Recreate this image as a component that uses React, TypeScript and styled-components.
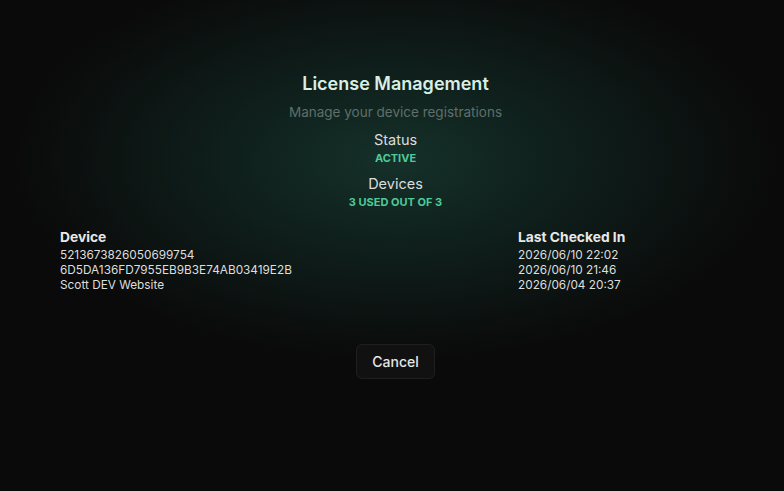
import { Fragment } from "react";
import styled, { createGlobalStyle } from "styled-components";

const GlobalStyle = createGlobalStyle`
    html, body {
        margin: 0;
        height: 100%;
        background: #0a0a0a;
    }
    #root {
        height: 100%;
    }
`;

const Page = styled.div`
    height: 491px;
    box-sizing: border-box;
    padding: 72px 0 0 7px;
    background: radial-gradient(
        ellipse 380px 200px at 395px 160px,
        #15302a 0%,
        #0f1f1b 45%,
        #0a0a0a 100%
    );
    font-family: Inter, "Liberation Sans", sans-serif;
    display: flex;
    flex-direction: column;
    align-items: center;
`;

const Title = styled.h1`
    margin: 0;
    font-size: 18px;
    font-weight: 600;
    line-height: 24px;
    color: #d9efe4;
`;

const Subtitle = styled.p`
    margin: 6px 0 0;
    font-size: 13.5px;
    line-height: 20px;
    color: #5f6f69;
`;

const StatBlock = styled.div<{ $gap: number }>`
    margin-top: ${(p) => p.$gap}px;
    display: flex;
    flex-direction: column;
    align-items: center;
`;

const StatLabel = styled.div`
    font-size: 14.5px;
    line-height: 20px;
    color: #dcdcdc;
`;

const StatValue = styled.div`
    font-size: 11px;
    font-weight: 700;
    line-height: 16px;
    text-transform: uppercase;
    color: #4ecb97;
`;

const Table = styled.div`
    align-self: stretch;
    margin: 17px 60px 0 53px;
    display: grid;
    grid-template-columns: 458px 1fr;
`;

const HeadCell = styled.div`
    font-size: 13.8px;
    font-weight: 700;
    line-height: 21px;
    color: #e8e8e8;
`;

const Cell = styled.div`
    font-size: 11.8px;
    line-height: 15px;
    color: #dedede;
`;

const Footer = styled.div`
    margin-top: 51px;
    display: flex;
    justify-content: center;
`;

const Button = styled.button`
    height: 35px;
    width: 79px;
    padding: 0;
    border-radius: 6px;
    border: 1px solid #1f1f1f;
    background: #111111;
    color: #e6e6e6;
    font-family: inherit;
    font-size: 14px;
    font-weight: 500;
    cursor: pointer;
`;

const devices = [
    { name: "5213673826050699754", checked: "2026/06/10 22:02" },
    { name: "6D5DA136FD7955EB9B3E74AB03419E2B", checked: "2026/06/10 21:46" },
    { name: "Scott DEV Website", checked: "2026/06/04 20:37" }
];

const App = () => {
    return (
        <>
            <GlobalStyle />
            <Page>
                <Title>License Management</Title>
                <Subtitle>Manage your device registrations</Subtitle>
                <StatBlock $gap={8}>
                    <StatLabel>Status</StatLabel>
                    <StatValue>Active</StatValue>
                </StatBlock>
                <StatBlock $gap={8}>
                    <StatLabel>Devices</StatLabel>
                    <StatValue>3 used out of 3</StatValue>
                </StatBlock>
                <Table>
                    <HeadCell>Device</HeadCell>
                    <HeadCell>Last Checked In</HeadCell>
                    {devices.map((d) => (
                        <Fragment key={d.name}>
                            <Cell>{d.name}</Cell>
                            <Cell>{d.checked}</Cell>
                        </Fragment>
                    ))}
                </Table>
                <Footer>
                    <Button>Cancel</Button>
                </Footer>
            </Page>
        </>
    );
};

export default App;
